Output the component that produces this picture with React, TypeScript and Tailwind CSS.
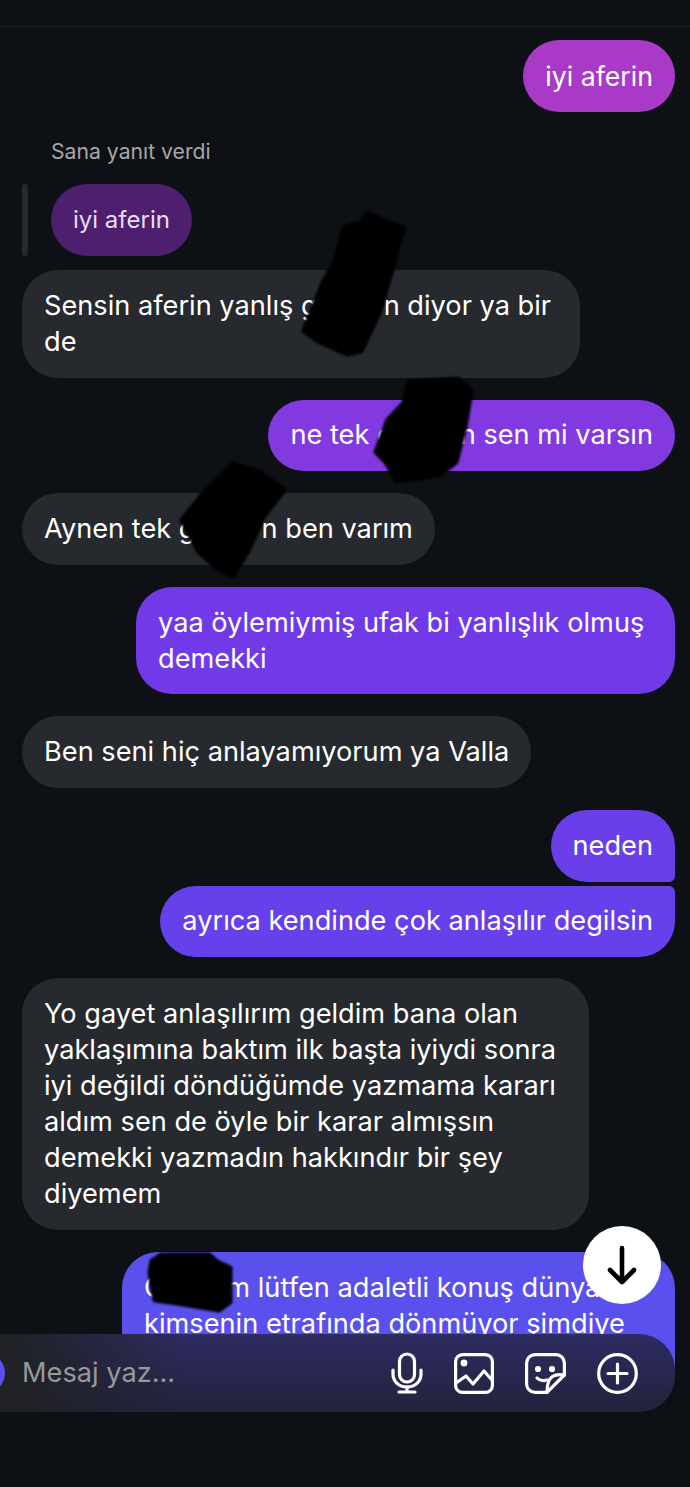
import React from "react";

const FONT = "font-['Inter','Noto_Sans',sans-serif]";

function Gap({ w }: { w: string }) {
  return <span className={`inline-block ${w}`} />;
}

function Sent({ color, className = "", children }: { color: string; className?: string; children: React.ReactNode }) {
  return (
    <div className="flex justify-end">
      <div className={`px-[22px] py-[17.8px] text-white ${color} ${className}`}>{children}</div>
    </div>
  );
}

function Received({ children, width = "" }: { children: React.ReactNode; width?: string }) {
  return (
    <div className="flex justify-start">
      <div className={`rounded-[36px] bg-[#26292e] px-[22px] py-[17.8px] text-white ${width}`}>{children}</div>
    </div>
  );
}

function MicIcon() {
  return (
    <svg width="32" height="42" viewBox="0 0 32 42" fill="none" stroke="white" strokeWidth="3.2" strokeLinecap="round" strokeLinejoin="round">
      <rect x="8.5" y="2" width="15" height="28" rx="7.5" />
      <path d="M2 18v4c0 7.5 6 13 14 13s14-5.500 14-13v-4" />
      <path d="M16 35v5M8 40h16" />
    </svg>
  );
}

function ImageIcon() {
  return (
    <svg width="40" height="41" viewBox="0 0 40 41" fill="none" stroke="white" strokeWidth="3.2" strokeLinecap="round" strokeLinejoin="round">
      <rect x="1.600" y="1.600" width="36.800" height="37.800" rx="7" />
      <circle cx="10" cy="10" r="1.800" fill="white" />
      <path d="M2 30l10-7 7 8 11-13 8 9" />
    </svg>
  );
}

function StickerIcon() {
  return (
    <svg width="41" height="41" viewBox="0 0 41 41" fill="none" stroke="white" strokeWidth="3.2" strokeLinecap="round" strokeLinejoin="round">
      <path d="M39.400 22V10a8.400 8.400 0 0 0-8.400-8.400H10A8.400 8.400 0 0 0 1.600 10v21a8.400 8.400 0 0 0 8.400 8.400h12z" />
      <path d="M39.400 22c-4-.5-9-.5-12 1.500-4 2.700-5.400 9-5.400 15.900" />
      <circle cx="13" cy="16" r="1.500" fill="white" />
      <circle cx="27" cy="16" r="1.500" fill="white" />
      <path d="M12 25c2.500 2.600 6 3.200 9.500 2" />
    </svg>
  );
}

function PlusIcon() {
  return (
    <svg width="41" height="41" viewBox="0 0 41 41" fill="none" stroke="white" strokeWidth="3.200" strokeLinecap="round">
      <circle cx="20.500" cy="20.500" r="18.800" />
      <path d="M20.500 11v19M11 20.500h19" />
    </svg>
  );
}

export default function App() {
  return (
    <div className={`relative h-[1487px] w-[690px] overflow-hidden bg-[#0d1015] text-[27.2px] leading-[36px] ${FONT}`}>
      <div className="h-[27px] border-b border-[#1c1f24]" />

      <div className="h-[1346px] overflow-hidden px-[15px] pt-[13px]">
        <Sent color="bg-[#a93ac8]" className="rounded-[36px] text-[26.7px]">iyi aferin</Sent>

        <p className="mt-[26.5px] pl-[36px] text-[21.2px] leading-[26px] text-[#a4a7ab]">Sana yanıt verdi</p>
        <div className="mt-[20px] flex gap-[23px] pl-[7px]">
          <div className="w-[6px] rounded-full bg-[#26292e]" />
          <div className="rounded-[36px] bg-[#4e1f6e] px-[22px] py-[18px] text-[24px] text-[#e9dcef]">iyi aferin</div>
        </div>

        <div className="mt-[14px] flex flex-col pl-[7px]">
          <Received width="w-[558px]">
            Sensin aferin yanlış g<Gap w="w-[66px]" />n diyor ya bir
            <br />
            de
          </Received>
          <div className="mt-[22px]">
            <Sent color="bg-[#8339e0]" className="rounded-[36px]">
              ne tek g<Gap w="w-[66px]" />n sen mi varsın
            </Sent>
          </div>
          <div className="mt-[22px]">
            <Received>
              Aynen tek g<Gap w="w-[66px]" />n ben varım
            </Received>
          </div>
          <div className="mt-[22px]">
            <Sent color="bg-[#7239e8]" className="w-[539px] rounded-[36px]">
              yaa öylemiymiş ufak bi yanlışlık olmuş demekki
            </Sent>
          </div>
          <div className="mt-[22px]">
            <Received>Ben seni hiç anlayamıyorum ya Valla</Received>
          </div>
          <div className="mt-[22px]">
            <Sent color="bg-[#6a3fea]" className="rounded-[36px] rounded-br-[6px]">neden</Sent>
          </div>
          <div className="mt-[4px]">
            <Sent color="bg-[#6640ea]" className="rounded-[36px] rounded-tr-[6px]">ayrıca kendinde çok anlaşılır degilsin</Sent>
          </div>
          <div className="mt-[21px]">
            <Received width="w-[567px]">
              Yo gayet anlaşılırım geldim bana olan yaklaşımına baktım ilk başta iyiydi sonra iyi değildi döndüğümde yazmama kararı aldım sen de öyle bir karar almışsın demekki yazmadın hakkındır bir şey diyemem
            </Received>
          </div>
          <div className="mt-[22px]">
            <Sent color="bg-[#5a50ee]" className="h-[200px] w-[553px] rounded-[36px]">
              G<Gap w="w-[62px]" />m lütfen adaletli konuş dünya
              <br />
              kimsenin etrafında dönmüyor şimdiye
            </Sent>
          </div>
        </div>
      </div>

      {/* black marker strokes over the names */}
      <svg className="absolute left-0 top-0 blur-[1px]" width="690" height="1487" viewBox="0 0 690 1487" fill="black" stroke="black" strokeWidth="5" strokeLinejoin="round">
        <path d="M368 214L403 228 391 273 379 313 361 351 347 354 318 341 304 331 323 283 336 260 344 228 360 223z" />
        <path d="M409 382L458 379 471 391 465 427 456 462 439 475 397 481 386 462 376 452 388 420 404 403z" />
        <path d="M233 464L259 472 284 490 263 517 250 547 233 576 217 568 199 552 182 520 203 494z" />
        <path d="M152 1261L161 1255 209 1255 217 1262 230 1268 230 1302 219 1310 177 1303 155 1300 150 1273z" />
      </svg>

      <button className="absolute left-[583px] top-[1226px] flex h-[78px] w-[78px] items-center justify-center rounded-full bg-white">
        <svg width="30" height="40" viewBox="0 0 30 40" fill="none" stroke="black" strokeWidth="4.600" strokeLinecap="round" strokeLinejoin="round">
          <path d="M15 3v34M3 25l12 12 12-12" />
        </svg>
      </button>

      <div className="absolute left-[-40px] top-[1334px] flex h-[78px] w-[715px] items-center rounded-[36px] bg-[linear-gradient(90deg,#1f2123_6%,rgba(31,33,35,0)_32%),linear-gradient(180deg,#2e2c62,#23223c)] pl-[62px] pr-[37px]">
        <div className="absolute left-[5px] h-[40px] w-[40px] rounded-full bg-[#5a50ee]" />
        <span className="flex-1 text-[#97999c]">Mesaj yaz...</span>
        <div className="flex items-center gap-[31px]">
          <MicIcon />
          <ImageIcon />
          <StickerIcon />
          <PlusIcon />
        </div>
      </div>
    </div>
  );
}
